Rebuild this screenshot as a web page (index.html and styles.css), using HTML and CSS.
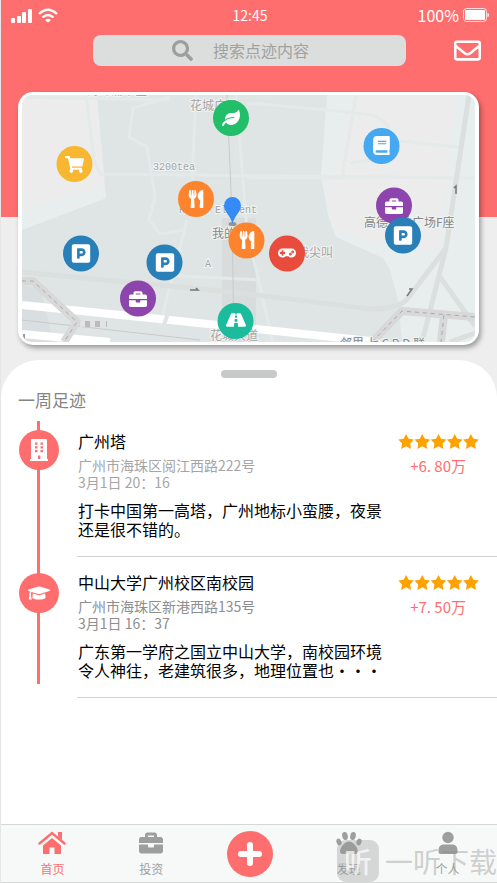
FILE: index.html
```html
<!DOCTYPE html>
<html lang="zh-CN">
<head>
<meta charset="utf-8">
<meta name="viewport" content="width=device-width, initial-scale=1">
<title>点迹</title>
<link rel="stylesheet" href="styles.css">
</head>
<body>
<svg class="defs" aria-hidden="true">
  <symbol id="briefcase" viewBox="0 0 512 512"><path d="M320 336c0 8.84-7.16 16-16 16h-96c-8.84 0-16-7.16-16-16v-48H0v144c0 25.6 22.4 48 48 48h416c25.6 0 48-22.4 48-48V288H320v48zm144-208h-80V80c0-25.6-22.4-48-48-48H176c-25.6 0-48 22.4-48 48v48H48c-25.6 0-48 22.4-48 48v80h512v-80c0-25.6-22.4-48-48-48zm-144 0H192V96h128v32z"/></symbol>
  <symbol id="parking" viewBox="0 0 448 512"><path d="M400 32H48C21.500 32 0 53.500 0 80v352c0 26.500 21.500 48 48 48h352c26.500 0 48-21.500 48-48V80c0-26.500-21.500-48-48-48zM240 320h-48v48c0 8.800-7.200 16-16 16h-32c-8.800 0-16-7.200-16-16V144c0-8.800 7.200-16 16-16h96c52.900 0 96 43.100 96 96s-43.100 96-96 96zm0-128h-48v64h48c17.600 0 32-14.400 32-32s-14.400-32-32-32z"/></symbol>
  <symbol id="utensils" viewBox="0 0 416 512"><path d="M207.900 15.200c.8 4.700 16.100 94.500 16.100 128.800 0 52.300-27.800 89.600-68.900 104.600L168 486.700c.7 13.700-10.200 25.300-24 25.300H80c-13.700 0-24.700-11.500-24-25.300l12.900-238.100C27.700 233.600 0 196.200 0 144 0 109.600 15.300 19.900 16.100 15.200 19.300-5.100 61.400-5.400 64 16.300v141.200c1.300 3.400 15.100 3.200 16 0 1.400-25.300 7.900-139.200 8-141.800 3.300-20.800 44.700-20.800 47.900 0 .2 2.700 6.600 116.500 8 141.800.9 3.200 14.800 3.400 16 0V16.300c2.600-21.600 44.800-21.400 48-1.100zm119.200 285.700l-15 185.100c-1.200 14 9.900 26 23.900 26h56c13.300 0 24-10.700 24-24V24c0-13.200-10.700-24-24-24-82.500 0-221.400 178.500-64.900 300.900z"/></symbol>
  <symbol id="star" viewBox="0 0 16 16"><path d="M8 .5l2.500 4.800 5.200.8-3.700 3.800.9 5.400L8 12.800l-4.900 2.500.9-5.400L.3 6.100l5.200-.8z"/></symbol>
  <symbol id="stars" viewBox="0 0 80 16">
    <use href="#star" width="16" height="16"/><use href="#star" x="16" width="16" height="16"/><use href="#star" x="32" width="16" height="16"/><use href="#star" x="48" width="16" height="16"/><use href="#star" x="64" width="16" height="16"/>
  </symbol>
</svg>

<header class="top">
  <div class="status">
    <span class="signals">
      <svg width="21" height="15" viewBox="0 0 21 15" fill="#fff" aria-hidden="true"><rect x="0" y="10" width="4" height="5" rx="1"/><rect x="6" y="8" width="4" height="7" rx="1"/><rect x="11" y="4" width="4" height="11" rx="1"/><rect x="17" y="1" width="4" height="14" rx="1"/></svg>
      <svg width="20" height="15" viewBox="0 0 20 15" fill="none" stroke="#fff" stroke-width="2.300" aria-hidden="true"><path d="M1 6Q10-2.500 19 6M4.500 9.500Q10 4.500 15.500 9.500"/><path d="M7 12Q10 9.500 13 12L10 14.500z" fill="#fff" stroke="none"/></svg>
    </span>
    <time class="clock">12:45</time>
    <span class="power">100%
      <svg width="26" height="14" viewBox="0 0 26 14" aria-hidden="true"><rect x=".5" y=".5" width="23" height="13" rx="3" fill="none" stroke="#fff" stroke-opacity=".75"/><rect x="2" y="2" width="20" height="10" rx="1" fill="#fff"/><path d="M24.500 5q1.500 0 1.500 2t-1.500 2z" fill="#fff"/></svg>
    </span>
  </div>

  <div class="tools">
    <form class="search" role="search">
      <label for="q"><svg width="21" height="21" viewBox="0 0 512 512" fill="#9d9f9e" role="img" aria-label="搜索"><path d="M505 442.700L405.300 343c-4.500-4.500-10.600-7-17-7H372c27.600-35.300 44-79.700 44-128C416 93.100 322.900 0 208 0S0 93.100 0 208s93.100 208 208 208c48.300 0 92.700-16.400 128-44v16.300c0 6.400 2.500 12.500 7 17l99.700 99.700c9.400 9.400 24.600 9.400 33.900 0l28.300-28.300c9.400-9.400 9.400-24.600.1-34zM208 336c-70.700 0-128-57.200-128-128 0-70.700 57.200-128 128-128 70.700 0 128 57.200 128 128 0 70.700-57.200 128-128 128z"/></svg></label>
      <input id="q" type="search" placeholder="搜索点迹内容">
    </form>
    <button class="mail" type="button" aria-label="消息"><svg width="27" height="27" viewBox="0 0 512 512" fill="#fff"><path d="M464 64H48C21.490 64 0 85.490 0 112v288c0 26.510 21.490 48 48 48h416c26.510 0 48-21.490 48-48V112c0-26.510-21.490-48-48-48zm0 48v40.805c-22.422 18.259-58.168 46.651-134.587 106.490-16.841 13.247-50.201 45.072-73.413 44.701-23.208.375-56.579-31.459-73.413-44.701C106.180 199.465 70.425 171.067 48 152.805V112h416zM48 400V214.398c22.914 18.251 55.409 43.862 104.938 82.646 21.857 17.205 60.134 55.186 103.062 54.955 42.717.231 80.509-37.199 103.053-54.947 49.528-38.783 82.032-64.401 104.947-82.653V400H48z"/></svg></button>
  </div>

  <div class="map">
    <svg viewBox="22 95 453 247" role="img" aria-label="足迹地图">
      <rect x="22" y="95" width="453" height="247" fill="#dfe5e5"/>
      <!-- land blocks -->
      <path d="M22 95H97L106 198 48 220 22 228z" fill="#ececec"/>
      <path d="M22 208L104 186 106 198 48 220 22 230z" fill="#e8edee"/>
      <path d="M327 95H475V342H402L398 300 390 270 383 258 336 237 328 215 321 175z" fill="#e8edee"/>
      <path d="M354 95H456L444 215 437 250 380 244 332 228 328 205z" fill="#ececec"/>
      <path d="M222 218H256V342H222z" fill="#d9dcdc"/>
      <path d="M22 285L40 288 54 342H22z" fill="#d9dfe0"/>
      <!-- streets -->
      <g fill="none" stroke="#e4e9e9" stroke-width="3">
        <path d="M86 95L94 160 100 174 475 178M170 97L133 108 129 137 147 147 155 197 149 220 160 234 186 230M196 95L192 180M187 220L160 325M236 95L247 230 273 342M247 103L327 110 372 115Q388 121 390 132M356 95L342 178 247 178M400 141L459 147M350 163L372 160M160 275L260 280"/>
        <path d="M22 97L170 100"/>
      </g>
      <g fill="none" stroke="#dbdfdd" stroke-width="5">
        <path d="M22 272Q100 280 160 285T370 309Q400 309 408 298L446 248M469 95L446 248 422 342M440 277L475 326M450 342L475 333"/>
      </g>
      <g fill="none" stroke="#fff" stroke-width="8">
        <path d="M22 305L160 319 380 342M22 334L110 342"/>
      </g>
      <path d="M164 325L169 310" stroke="#dfe5e5" stroke-width="4"/>
      <path d="M22 320L200 340M227 95L232 215 234 342" fill="none" stroke="#c8caca"/>
      <g fill="none">
        <path d="M22 281H33L77 322 64 342M372 342L402 311 475 317M444 315L441 342" stroke="#d8d8d8" stroke-width="8"/>
        <path d="M22 281H33L77 322 64 342M372 342L402 311 475 317M444 315L441 342" stroke="#aaa" stroke-dasharray="4 4"/>
      </g>
      <path d="M80 321h22v6H80z" fill="#e3e3e3"/>
      <path d="M85 321h5v6h-5zM95 321h5v6h-5zM106 321h1v6h-1z" fill="#bbb"/>
      <g fill="none" stroke="#777" stroke-width="1.500"><path d="M190 290h8l-2-2M456 194v-8l-2 2M407 296l5-7h-3M24 334v5l-3-2"/></g>
      <!-- place names -->
      <g>
        <text x="87" y="95" class="place">海珠涌中区</text>
        <text x="190" y="110" class="place">花城广场</text>
        <text x="153" y="170" class="place latin">3200tea</text>
        <text x="179" y="213" class="place latin">Royal Element</text>
        <text x="212" y="238" class="place dark">我的位置</text>
        <text x="205" y="267" class="place latin">A</text>
        <text x="297" y="257" class="place">我尖叫</text>
        <text x="364" y="227" class="place dark">高德置地广场F座</text>
        <text x="210" y="340" class="place">花城大道</text>
        <text x="340" y="348" class="place dark">邻里 七 C B D 联</text>
      </g>
      <!-- current position -->
      <ellipse cx="232.500" cy="224" rx="4" ry="2" fill="#8e9698"/>
      <path d="M232.500 224C231 216 224 212 224 205.500a8.500 8.500 0 0 1 17 0C241 212 234 216 232.500 224z" fill="#358bf5"/>
      <!-- pins -->
      <g>
        <circle cx="231" cy="118" r="18" fill="#22be69"/>
        <svg x="222" y="110" width="18" height="16" viewBox="0 0 576 512" fill="#fff"><path d="M546.200 9.700c-5.600-12.500-21.600-13-28.300-1.200C486.900 62.400 431.400 96 368 96h-80C182 96 96 182 96 288c0 7 .8 13.700 1.500 20.500C161.300 262.800 253.400 224 384 224c8.800 0 16 7.200 16 16s-7.200 16-16 16C132.600 256 26 410.100 2.400 468c-6.600 16.300 1.200 34.900 17.500 41.600 16.400 6.800 35-1.100 41.800-17.300 1.500-3.600 20.900-47.900 71.900-90.600 32.400 43.900 94 85.800 174.900 77.200C465.500 467.500 576 326.700 576 154.300c0-50.200-10.800-102.200-29.800-144.600z"/></svg>
        <circle cx="74.500" cy="164" r="18" fill="#f7b731"/>
        <svg x="65" y="156" width="19" height="17" viewBox="0 0 576 512" fill="#fff"><path d="M528.120 301.319l47.273-208C578.806 78.301 567.391 64 551.990 64H159.208l-9.166-44.810C147.758 8.021 137.930 0 126.529 0H24C10.745 0 0 10.745 0 24v16c0 13.255 10.745 24 24 24h69.883l70.248 343.435C147.325 417.100 136 435.222 136 456c0 30.928 25.072 56 56 56s56-25.072 56-56c0-15.674-6.447-29.835-16.824-40h209.647C430.447 426.165 424 440.326 424 456c0 30.928 25.072 56 56 56s56-25.072 56-56c0-22.172-12.888-41.332-31.579-50.405l5.517-24.276c3.413-15.018-8.002-29.319-23.403-29.319H218.117l-6.545-32h293.145c11.206 0 20.920-7.754 23.403-18.681z"/></svg>
        <circle cx="381.500" cy="146" r="18" fill="#45a9f2"/>
        <svg x="373" y="136" width="17" height="19" viewBox="0 0 448 512" fill="#fff"><path d="M448 360V24c0-13.300-10.700-24-24-24H96C43 0 0 43 0 96v320c0 53 43 96 96 96h328c13.300 0 24-10.700 24-24v-16c0-7.500-3.500-14.300-8.900-18.700-4.200-15.400-4.200-59.300 0-74.700 5.400-4.300 8.900-11.100 8.900-18.600zM128 134c0-3.300 2.700-6 6-6h212c3.300 0 6 2.700 6 6v20c0 3.300-2.700 6-6 6H134c-3.300 0-6-2.700-6-6v-20zm0 64c0-3.300 2.700-6 6-6h212c3.300 0 6 2.700 6 6v20c0 3.300-2.700 6-6 6H134c-3.300 0-6-2.700-6-6v-20zm253.400 250H96c-17.700 0-32-14.300-32-32 0-17.600 14.400-32 32-32h285.400c-1.900 17.100-1.900 46.900 0 64z"/></svg>
        <circle cx="196" cy="199" r="18" fill="#fd832c"/>
        <use href="#utensils" x="187" y="190" width="18" height="18" fill="#fff"/>
        <circle cx="246.500" cy="240.500" r="18" fill="#fd832c"/>
        <use href="#utensils" x="238" y="231" width="18" height="18" fill="#fff"/>
        <circle cx="394" cy="205.500" r="18" fill="#8e44ad"/>
        <use href="#briefcase" x="385" y="197" width="18" height="18" fill="#fff"/>
        <circle cx="403" cy="235.500" r="18" fill="#2980b9"/>
        <use href="#parking" x="393" y="225" width="20" height="21" fill="#fff"/>
        <circle cx="81" cy="253.500" r="18" fill="#2980b9"/>
        <use href="#parking" x="71" y="243" width="20" height="21" fill="#fff"/>
        <circle cx="164.500" cy="262.500" r="18" fill="#2980b9"/>
        <use href="#parking" x="155" y="252" width="20" height="21" fill="#fff"/>
        <circle cx="138" cy="298.500" r="18" fill="#8e44ad"/>
        <use href="#briefcase" x="129" y="290" width="18" height="18" fill="#fff"/>
        <circle cx="287" cy="253.500" r="18" fill="#e74c3c"/>
        <svg x="278" y="245" width="18" height="16" viewBox="0 0 640 512" fill="#fff"><path d="M480 96H160C71.600 96 0 167.600 0 256s71.600 160 160 160c44.800 0 85.200-18.400 114.200-48h91.500c29 29.600 69.500 48 114.200 48 88.400 0 160-71.600 160-160S568.400 96 480 96zM256 276c0 6.600-5.400 12-12 12h-52v52c0 6.600-5.400 12-12 12h-40c-6.600 0-12-5.400-12-12v-52H76c-6.600 0-12-5.400-12-12v-40c0-6.600 5.400-12 12-12h52v-52c0-6.600 5.400-12 12-12h40c6.600 0 12 5.400 12 12v52h52c6.600 0 12 5.400 12 12v40zm184 68c-26.500 0-48-21.500-48-48s21.500-48 48-48 48 21.500 48 48-21.500 48-48 48zm80-80c-26.500 0-48-21.500-48-48s21.500-48 48-48 48 21.500 48 48-21.500 48-48 48z"/></svg>
        <circle cx="235.500" cy="321" r="18" fill="#1abc9c"/>
        <svg x="226" y="311" width="20" height="18" viewBox="0 0 576 512" fill="#fff"><path d="M573.190 402.670l-139.790-320C428.430 71.290 417.600 64 405.680 64h-97.590l2.450 23.160c.5 4.720-3.210 8.840-7.960 8.840h-29.160c-4.750 0-8.460-4.120-7.960-8.840L267.910 64h-97.590c-11.930 0-22.760 7.290-27.730 18.670L2.800 402.670C-6.450 423.860 8.310 448 30.540 448h196.840l10.310-97.680c.86-8.140 7.720-14.320 15.910-14.320h68.800c8.190 0 15.050 6.180 15.910 14.320L348.620 448h196.840c22.230 0 36.990-24.140 27.730-45.330zM260.400 135.160a8 8 0 0 1 7.960-7.160h39.290c4.090 0 7.530 3.090 7.960 7.160l4.600 43.580c.75 7.090-4.810 13.260-11.930 13.260h-40.540c-7.130 0-12.680-6.170-11.930-13.260l4.590-43.580zM315.640 304h-55.290c-9.500 0-16.910-8.230-15.910-17.680l5.070-48c.86-8.140 7.720-14.320 15.910-14.320h45.150c8.190 0 15.050 6.180 15.910 14.320l5.070 48c1 9.450-6.410 17.680-15.910 17.680z"/></svg>
      </g>
    </svg>
  </div>
</header>

<main class="sheet">
  <div class="handle"></div>
  <h1>一周足迹</h1>
  <ol class="timeline">
    <li>
      <span class="dot"><svg width="18" height="22" viewBox="0 0 18 22" aria-hidden="true"><path fill="#fff" fill-rule="evenodd" d="M2 0h14q1 0 1 1v19h1v2H0v-2h1V1q0-1 1-1zM5 3.500v2.300h2.500V3.500zm5.500 0v2.300H13V3.500zM5 7.200v2.300h2.500V7.200zm5.500 0v2.300H13V7.200zM5 11v2.300h2.500V11zm5.500 0v2.300H13V11zM8 16.500V20h2.300v-3.500z"/></svg></span>
      <article>
        <div class="row"><h2>广州塔</h2><svg class="stars" width="81" height="17" role="img" aria-label="五星"><use href="#stars"/></svg></div>
        <div class="row meta"><p>广州市海珠区阅江西路222号<br>3月1日 20：16</p><strong>+6. 80万</strong></div>
        <p class="note">打卡中国第一高塔，广州地标小蛮腰，夜景还是很不错的。</p>
      </article>
    </li>
    <li>
      <span class="dot"><svg width="22" height="18" viewBox="0 0 640 512" fill="#fff" aria-hidden="true"><path d="M622.340 153.200L343.400 67.500c-15.200-4.670-31.600-4.670-46.790 0L17.660 153.200c-23.540 7.230-23.540 38.360 0 45.590l48.630 14.940c-10.670 13.190-17.230 29.280-17.880 46.900C38.780 266.150 32 276.110 32 288c0 10.780 5.680 19.850 13.860 25.650L20.330 428.530C18.110 438.520 25.710 448 35.940 448h56.110c10.240 0 17.840-9.480 15.620-19.470L82.140 313.650C90.320 307.850 96 298.780 96 288c0-11.570-6.470-21.250-15.660-26.870.76-15.020 8.440-28.300 20.690-36.720L296.600 284.500c9.060 2.780 26.440 6.250 46.790 0l278.950-85.700c23.550-7.240 23.550-38.360 0-45.600zM352.790 315.090c-28.530 8.760-52.840 3.920-65.590 0l-145.020-44.550L128 384c0 35.350 85.960 64 192 64s192-28.650 192-64l-14.180-113.470-145.030 44.560z"/></svg></span>
      <article>
        <div class="row"><h2>中山大学广州校区南校园</h2><svg class="stars" width="81" height="17" role="img" aria-label="五星"><use href="#stars"/></svg></div>
        <div class="row meta deep"><p>广州市海珠区新港西路135号<br>3月1日 16：37</p><strong>+7. 50万</strong></div>
        <p class="note">广东第一学府之国立中山大学，南校园环境令人神往，老建筑很多，地理位置也・・・</p>
      </article>
    </li>
  </ol>
</main>

<nav class="tabs">
  <a href="#home" class="on"><svg width="28" height="24" viewBox="0 0 28 24" aria-hidden="true"><path d="M5 14.500L14 7l9 7.500V23h-6.500v-6.500h-5V23H5z" fill="currentColor"/><path d="M1.500 12.500L14 2l12.500 10.500" fill="none" stroke="currentColor" stroke-width="2.400" stroke-linecap="round"/><path d="M20 1h4v8l-4-3.500z" fill="currentColor"/></svg>首页</a>
  <a href="#invest"><svg width="26" height="24" aria-hidden="true" fill="currentColor"><use href="#briefcase"/></svg>投资</a>
  <button type="button" aria-label="添加"><svg width="24" height="24" viewBox="0 0 24 24" fill="none" stroke="#fff" stroke-width="6" stroke-linecap="round"><path d="M12 3v18M3 12h18"/></svg></button>
  <a href="#find"><svg width="26" height="24" viewBox="0 0 26 24" fill="currentColor" aria-hidden="true"><ellipse cx="9" cy="5" rx="2.800" ry="4" transform="rotate(-12 9 5)"/><ellipse cx="17" cy="5" rx="2.800" ry="4" transform="rotate(12 17 5)"/><ellipse cx="3" cy="11" rx="2.500" ry="3.400" transform="rotate(-20 3 11)"/><ellipse cx="23" cy="11" rx="2.500" ry="3.400" transform="rotate(20 23 11)"/><path d="M13 10.500c4 0 9 6 9 10 0 2-2 2.500-4 2.500s-3-1-5-1-3 1-5 1-4-.5-4-2.500c0-4 5-10 9-10z"/></svg>发现</a>
  <a href="#me"><svg width="20" height="24" viewBox="0 0 20 24" fill="currentColor" aria-hidden="true"><circle cx="10" cy="6.500" r="5.700"/><path d="M4.500 13.500h11q4 1 4 6V21q0 2-2 2h-15q-2 0-2-2v-1.500q0-5 4-6z"/></svg>个人</a>
  <div class="brand"><b>听</b><span>一听下载</span></div>
</nav>
</body>
</html>
```
FILE: styles.css
```css
* { box-sizing: border-box; }

body {
  margin: 0;
  min-height: 100vh;
  display: flex;
  flex-direction: column;
  background: #eee;
  border-left: 1px solid #e6e6e6;
  font-family: "Noto Sans CJK SC", sans-serif;
  color: #000;
  overflow-x: hidden;
}

h1, h2, p, ol { margin: 0; padding: 0; font-weight: 400; }
svg { display: block; flex: none; }
button { border: 0; padding: 0; background: none; cursor: pointer; }
.defs { position: absolute; width: 0; height: 0; }

/* header */
.top {
  background: linear-gradient(#ff6e6e 217px, #eee 217px);
  padding: 0 18px 15px 17px;
}

.status {
  height: 30px;
  margin: 0 -10px 5px -7px;
  display: grid;
  grid-template-columns: 1fr auto 1fr;
  align-items: center;
  color: #fff;
}
.signals { display: flex; gap: 6px; }
.clock { font-size: 14px; }
.power {
  display: flex;
  justify-content: flex-end;
  align-items: center;
  gap: 4px;
  font-size: 16px;
}

.tools {
  display: flex;
  justify-content: space-between;
  align-items: center;
  padding-left: 75px;
  gap: 48px;
}
.mail { margin-right: -2px; }
.search {
  flex: 1;
  height: 31px;
  display: flex;
  align-items: center;
  gap: 20px;
  padding-left: 79px;
  border-radius: 8px;
  background: #dcdedd;
}
.search input {
  flex: 1;
  min-width: 0;
  height: 29px;
  margin-bottom: 2px;
  padding: 0;
  border: 0;
  outline: 0;
  background: none;
  font: 16px "Noto Sans CJK SC", sans-serif;
  color: #555;
}
.search input::placeholder { color: #a0a2a1; }

.map {
  margin-top: 26px;
  border: 3px solid #fff;
  border-width: 3px 4px;
  border-radius: 15px;
  background: #fff;
  box-shadow: 2px 3px 5px rgba(0, 0, 0, .35);
}
.map > svg { width: 100%; height: auto; border-radius: 10px; }
.place {
  font-size: 12px;
  fill: #a3a5a5;
  stroke: #f1f3f3;
  stroke-width: 2px;
  paint-order: stroke;
}
.latin { font-family: "Liberation Mono", monospace; font-size: 10px; }
.dark { fill: #858787; }

/* footprints */
.sheet {
  flex: 1;
  padding-top: 10px;
  border-radius: 38px 38px 0 0;
  background: #fff;
}
.handle {
  width: 56px;
  height: 8px;
  margin: 0 auto;
  border-radius: 4px;
  background: #c8caca;
}
h1 {
  margin: 10px 0 4px 17px;
  font-size: 17px;
  line-height: 24px;
  color: #848484;
}
.timeline { position: relative; list-style: none; }
.timeline::before {
  content: "";
  position: absolute;
  left: 36px;
  top: 5px;
  bottom: 14px;
  width: 3px;
  background: #ff6e6e;
}
.timeline li {
  display: grid;
  grid-template-columns: 40px 1fr;
  gap: 18px;
  padding-left: 18px;
}
.dot {
  position: relative;
  width: 40px;
  height: 40px;
  margin-top: 14px;
  border-radius: 50%;
  display: grid;
  place-items: center;
  background: #ff6e6e;
}
li + li .dot { margin-top: 16px; }
article {
  padding: 13px 18px 17px 1px;
  border-bottom: 1px solid #d2d2d2;
}
.row {
  display: flex;
  justify-content: space-between;
  align-items: center;
}
h2 { font-size: 16px; line-height: 24px; }
.stars { fill: #ffa200; }
.meta {
  align-items: flex-start;
  margin: 4px 0 10px;
  font-size: 14px;
  line-height: 17px;
  color: #a5a5a5;
}
.deep { color: #8e8e8e; }
.meta strong {
  padding-right: 13px;
  font-size: 15px;
  font-weight: 400;
  color: #ff6e6e;
}
.note {
  max-width: 19em;
  font-size: 16px;
  line-height: 19px;
}

/* tab bar */
.tabs {
  position: relative;
  height: 59px;
  padding-left: 2px;
  display: grid;
  grid-template-columns: repeat(5, 1fr);
  justify-items: center;
  align-items: center;
  border: solid #d6d8d8;
  border-width: 1px 0;
  background: #f7f9f9;
}
.tabs a {
  display: flex;
  flex-direction: column;
  align-items: center;
  gap: 5px;
  padding-top: 2px;
  font-size: 12px;
  line-height: 18px;
  color: #9d9f9e;
  text-decoration: none;
}
.tabs .on { color: #ff6e6e; }
.tabs button {
  width: 46px;
  height: 46px;
  border-radius: 50%;
  display: grid;
  place-items: center;
  background: #ff6e6e;
}
.brand {
  position: absolute;
  right: 0;
  bottom: 0;
  display: flex;
  align-items: center;
  gap: 6px;
  font-size: 28px;
  line-height: 42px;
  color: rgba(140, 140, 140, .4);
  pointer-events: none;
}
.brand span { white-space: nowrap; }
.brand b {
  width: 42px;
  height: 42px;
  border-radius: 9px;
  text-align: center;
  font-weight: 500;
  color: rgba(255, 255, 255, .7);
  background: rgba(150, 150, 150, .35);
}
```
